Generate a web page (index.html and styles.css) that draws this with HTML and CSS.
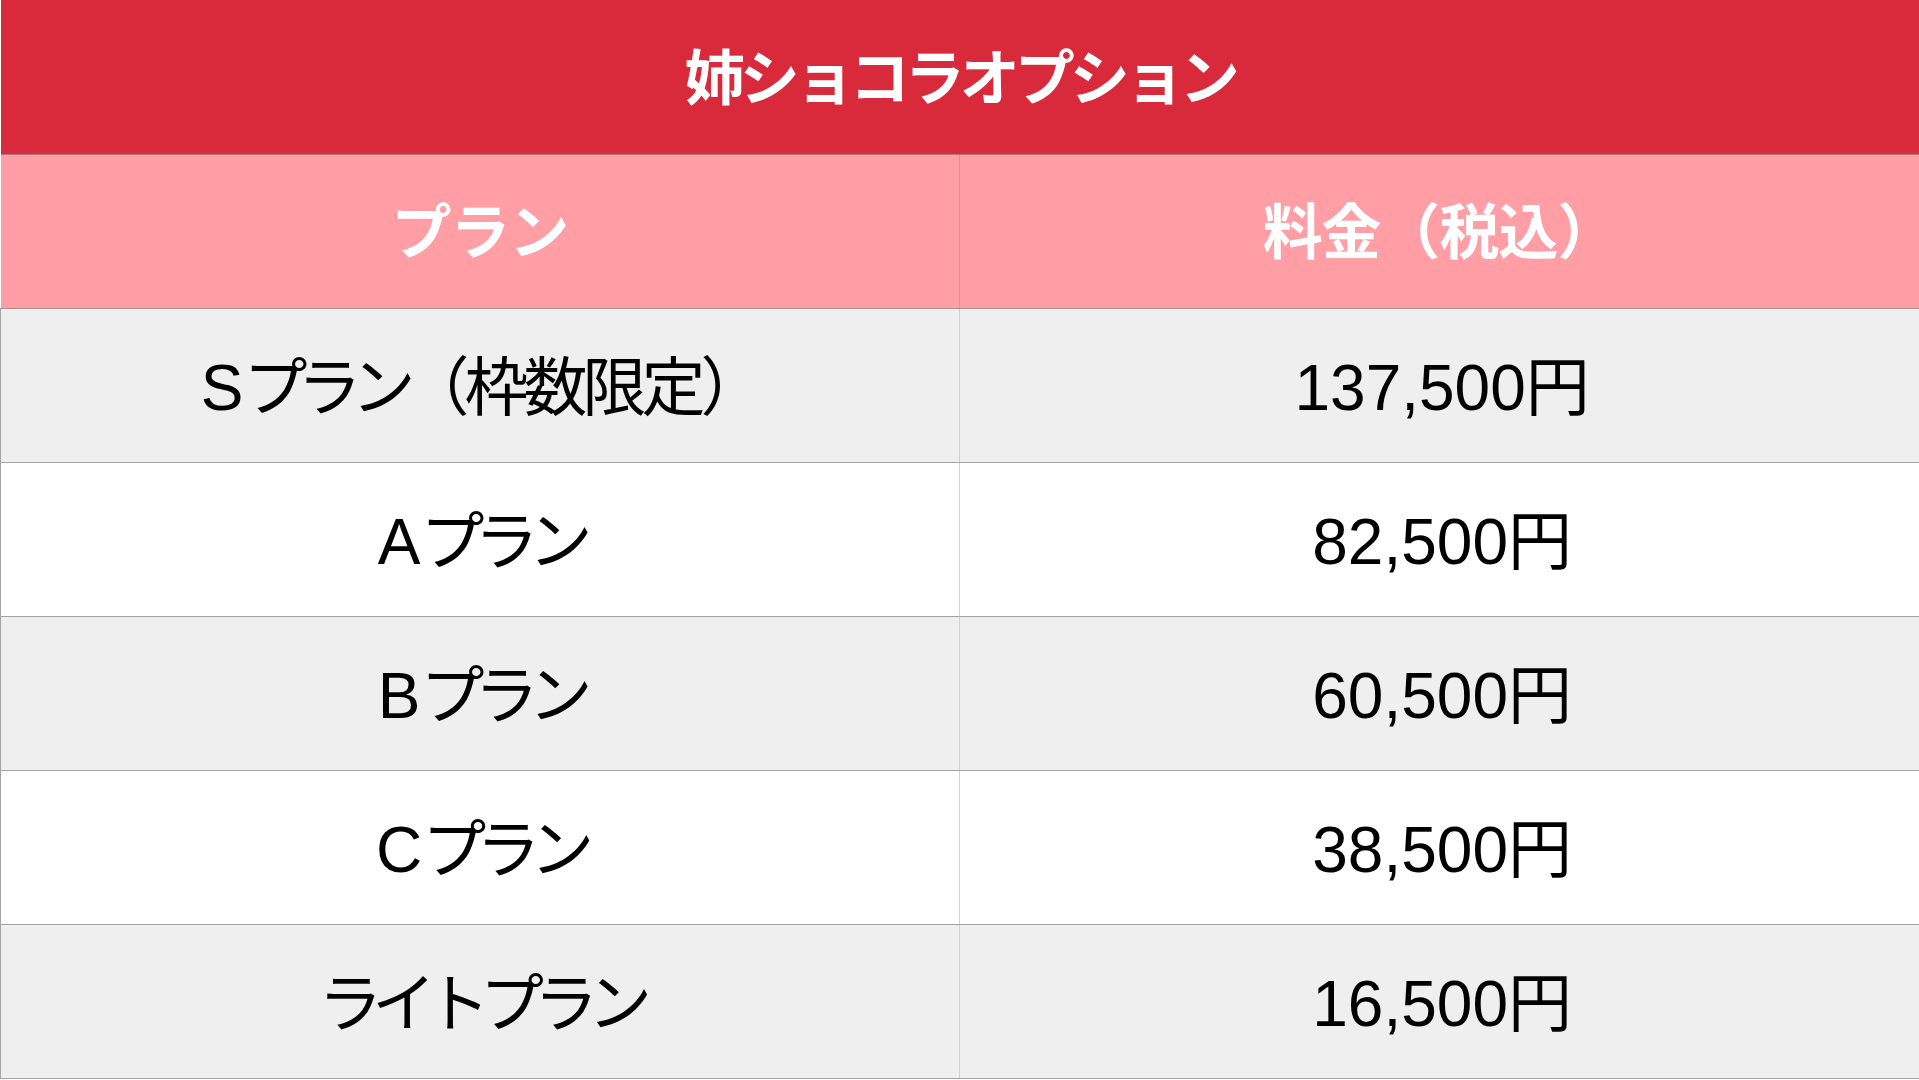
FILE: index.html
```html
<!DOCTYPE html>
<html lang="ja">
<head>
<meta charset="utf-8">
<link rel="stylesheet" href="styles.css">
</head>
<body>
<table class="price-table">
  <thead>
    <tr class="title-row"><th colspan="2"><span class="ja">姉ショコラオプション</span></th></tr>
    <tr class="head-row"><th><span class="ja">プラン</span></th><th><span class="ja">料金（税込）</span></th></tr>
  </thead>
  <tbody>
    <tr class="odd"><td><span class="lat">S</span><span class="ja kana">プラン</span><span class="ja kanji">（枠数限定）</span></td><td><span class="lat">137,500</span><span class="ja kanji">円</span></td></tr>
    <tr><td><span class="lat">A</span><span class="ja kana">プラン</span></td><td><span class="lat">82,500</span><span class="ja kanji">円</span></td></tr>
    <tr class="odd"><td><span class="lat">B</span><span class="ja kana">プラン</span></td><td><span class="lat">60,500</span><span class="ja kanji">円</span></td></tr>
    <tr><td><span class="lat">C</span><span class="ja kana">プラン</span></td><td><span class="lat">38,500</span><span class="ja kanji">円</span></td></tr>
    <tr class="odd"><td><span class="ja kana">ライトプラン</span></td><td><span class="lat">16,500</span><span class="ja kanji">円</span></td></tr>
  </tbody>
</table>
</body>
</html>
```
FILE: styles.css
```css
html, body {
  margin: 0;
  padding: 0;
  background: #ffffff;
}

.price-table {
  width: 1919px;
  border-collapse: collapse;
  table-layout: fixed;
  font-family: "Liberation Sans", "Noto Sans CJK JP", sans-serif;
  color: #000;
}

.price-table th,
.price-table td {
  height: 154px;
  box-sizing: border-box;
  padding: 0;
  text-align: center;
  vertical-align: middle;
  white-space: nowrap;
  line-height: 1;
}

.price-table th:first-child,
.price-table td:first-child {
  width: 959px;
}

.title-row th {
  background: #d92a3b;
  color: #fff;
  font-size: 60px;
  font-weight: bold;
  border-bottom: 1px solid #b8737a;
}

.head-row th {
  background: #ff9ea5;
  color: #fff;
  font-size: 60px;
  font-weight: bold;
  border-bottom: 1px solid #a9908f;
}

.head-row th + th {
  border-left: 1px solid #e28d94;
}

.price-table td {
  font-size: 64px;
  background: #fff;
  border-bottom: 1px solid #a3a3a3;
}

.price-table td:first-child {
  border-left: 1px solid #a3a3a3;
}

.price-table td + td {
  border-left: 1px solid #d0d0d0;
}

.price-table tr.odd td {
  background: #efefef;
}

.ja {
  font-family: "Noto Sans CJK JP", sans-serif;
}

.kana {
  letter-spacing: -10px;
}

.kanji {
  letter-spacing: -5px;
}

.title-row .ja {
  letter-spacing: -5px;
}

.head-row .ja {
  letter-spacing: -1px;
}

.lat {
  font-family: "Liberation Sans", sans-serif;
}
```
